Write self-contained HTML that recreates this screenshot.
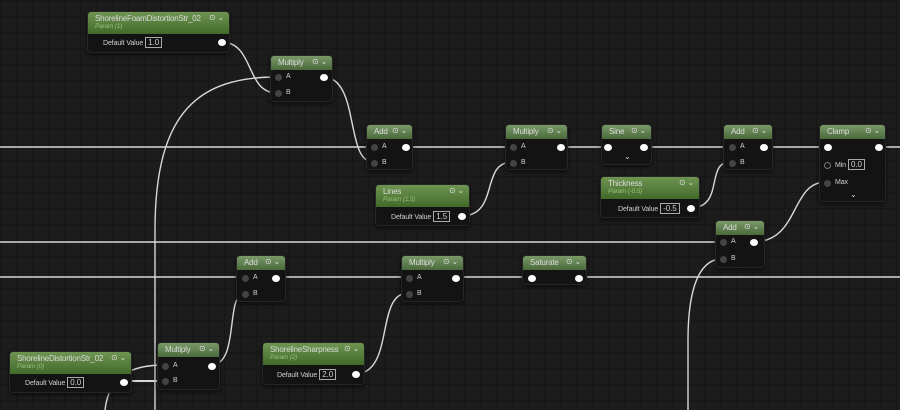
<!DOCTYPE html>
<html><head><meta charset="utf-8"><style>
*{margin:0;padding:0;box-sizing:border-box}
body{width:900px;height:410px;overflow:hidden;background:#1c1c1c;font-family:"Liberation Sans",sans-serif;position:relative;
background-image:linear-gradient(90deg,rgba(0,0,0,0.18) 1px,transparent 1px),linear-gradient(rgba(0,0,0,0.18) 1px,transparent 1px);
background-size:16px 16px;}
svg{position:absolute;left:0;top:0}
.n{position:absolute;background:#131313;border-radius:4px;box-shadow:0 2px 4px rgba(0,0,0,0.6);border:1px solid #262626}
.h{height:14px;background:linear-gradient(#7a9968,#4a6a3c);border-radius:3px 3px 0 0;color:#dcdcdc;font-size:8px;font-weight:normal;letter-spacing:-0.2px;padding:2px 0 0 7px;position:relative;white-space:nowrap}
.h2{height:22px;background:linear-gradient(#6f9552,#416a2a)}
.h .s{position:absolute;right:5px;top:1px;font-size:8px;color:#ddd}
.h .p{display:block;font-style:italic;font-size:6.5px;color:#98bf78;margin-top:0}
.t{position:absolute;color:#d0d0d0;font-size:7px;letter-spacing:-0.1px}
.box{border:1px solid #aaa;padding:0 2px;margin-left:2px;font-size:8px}
.pin{position:absolute;width:8px;height:7px;border-radius:50%;background:#fff}
.ip{position:absolute;width:7px;height:7px;border-radius:50%;background:#444}
.ch{position:absolute;color:#ddd;font-size:8px}
</style></head><body>
<svg width="900" height="410" fill="none" stroke="#d8d8d8" stroke-width="1.4">
<path d="M0 147H900"/><path d="M0 242H722"/><path d="M0 277H900"/>
<path d="M277 77C200 77 155 110 155 230V410"/>
<path d="M221 42C255 42 245 93 277 93"/>
<path d="M323 77C360 77 345 162 373 162"/>
<path d="M461 216C500 216 480 162 512 162"/>
<path d="M690 208C725 208 705 162 730 162"/>
<path d="M753 242C800 242 790 182 826 182"/>
<path d="M211 365C240 365 225 294 244 294"/>
<path d="M355 374C395 374 375 293 408 293"/>
<path d="M722 259C695 259 688 300 688 340V410"/>
<path d="M122 381H164" stroke-width="2"/>
<path d="M164 365C120 365 108 385 105 410"/>
</svg>

<div class="n" style="left:87px;top:11px;width:143px;height:42px"><div class="h h2">ShorelineFoamDistortionStr_02<span class="s">⊙ ⌄</span><span class="p">Param (1)</span></div>
<div class="t" style="left:15px;top:26px">Default Value<span class="box">1.0</span></div><div class="pin" style="left:130px;top:27px"></div></div>

<div class="n" style="left:270px;top:55px;width:63px;height:47px"><div class="h">Multiply<span class="s">⊙ ⌄</span></div>
<div class="ip" style="left:4px;top:18px"></div><div class="t" style="left:15px;top:17px">A</div>
<div class="ip" style="left:4px;top:34px"></div><div class="t" style="left:15px;top:33px">B</div><div class="pin" style="left:49px;top:18px"></div></div>

<div class="n" style="left:366px;top:124px;width:47px;height:46px"><div class="h">Add<span class="s">⊙ ⌄</span></div>
<div class="ip" style="left:4px;top:19px"></div><div class="t" style="left:15px;top:18px">A</div>
<div class="ip" style="left:4px;top:35px"></div><div class="t" style="left:15px;top:34px">B</div><div class="pin" style="left:35px;top:19px"></div></div>

<div class="n" style="left:505px;top:124px;width:63px;height:46px"><div class="h">Multiply<span class="s">⊙ ⌄</span></div>
<div class="ip" style="left:4px;top:19px"></div><div class="t" style="left:15px;top:18px">A</div>
<div class="ip" style="left:4px;top:35px"></div><div class="t" style="left:15px;top:34px">B</div><div class="pin" style="left:51px;top:19px"></div></div>

<div class="n" style="left:601px;top:124px;width:51px;height:41px"><div class="h">Sine<span class="s">⊙ ⌄</span></div>
<div class="pin" style="left:2px;top:19px"></div><div class="pin" style="left:38px;top:19px"></div><div class="ch" style="left:22px;top:27px">⌄</div></div>

<div class="n" style="left:723px;top:124px;width:50px;height:46px"><div class="h">Add<span class="s">⊙ ⌄</span></div>
<div class="ip" style="left:5px;top:19px"></div><div class="t" style="left:16px;top:18px">A</div>
<div class="ip" style="left:5px;top:35px"></div><div class="t" style="left:16px;top:34px">B</div><div class="pin" style="left:36px;top:19px"></div></div>

<div class="n" style="left:819px;top:124px;width:67px;height:78px"><div class="h">Clamp<span class="s">⊙ ⌄</span></div>
<div class="pin" style="left:4px;top:19px"></div><div class="pin" style="left:55px;top:19px"></div>
<div class="ip" style="left:4px;top:37px;background:none;border:1px solid #777"></div><div class="t" style="left:15px;top:35px">Min<span class="box">0.0</span></div>
<div class="ip" style="left:4px;top:55px"></div><div class="t" style="left:15px;top:54px">Max</div><div class="ch" style="left:30px;top:65px">⌄</div></div>

<div class="n" style="left:375px;top:184px;width:95px;height:42px"><div class="h h2">Lines<span class="s">⊙ ⌄</span><span class="p">Param (1.5)</span></div>
<div class="t" style="left:15px;top:27px">Default Value<span class="box">1.5</span></div><div class="pin" style="left:82px;top:28px"></div></div>

<div class="n" style="left:600px;top:176px;width:100px;height:42px"><div class="h h2">Thickness<span class="s">⊙ ⌄</span><span class="p">Param (-0.5)</span></div>
<div class="t" style="left:17px;top:27px">Default Value<span class="box">-0.5</span></div><div class="pin" style="left:86px;top:28px"></div></div>

<div class="n" style="left:715px;top:220px;width:50px;height:48px"><div class="h">Add<span class="s">⊙ ⌄</span></div>
<div class="ip" style="left:4px;top:18px"></div><div class="t" style="left:15px;top:17px">A</div>
<div class="ip" style="left:4px;top:35px"></div><div class="t" style="left:15px;top:34px">B</div><div class="pin" style="left:34px;top:18px"></div></div>

<div class="n" style="left:236px;top:255px;width:50px;height:47px"><div class="h">Add<span class="s">⊙ ⌄</span></div>
<div class="ip" style="left:5px;top:19px"></div><div class="t" style="left:16px;top:18px">A</div>
<div class="ip" style="left:5px;top:35px"></div><div class="t" style="left:16px;top:34px">B</div><div class="pin" style="left:35px;top:19px"></div></div>

<div class="n" style="left:401px;top:255px;width:63px;height:47px"><div class="h">Multiply<span class="s">⊙ ⌄</span></div>
<div class="ip" style="left:4px;top:19px"></div><div class="t" style="left:15px;top:18px">A</div>
<div class="ip" style="left:4px;top:35px"></div><div class="t" style="left:15px;top:34px">B</div><div class="pin" style="left:50px;top:19px"></div></div>

<div class="n" style="left:522px;top:255px;width:65px;height:30px"><div class="h">Saturate<span class="s">⊙ ⌄</span></div>
<div class="pin" style="left:5px;top:19px"></div><div class="pin" style="left:52px;top:19px"></div></div>

<div class="n" style="left:157px;top:342px;width:63px;height:48px"><div class="h">Multiply<span class="s">⊙ ⌄</span></div>
<div class="ip" style="left:4px;top:20px"></div><div class="t" style="left:15px;top:19px">A</div>
<div class="ip" style="left:4px;top:35px"></div><div class="t" style="left:15px;top:34px">B</div><div class="pin" style="left:50px;top:20px"></div></div>

<div class="n" style="left:262px;top:342px;width:103px;height:43px"><div class="h h2">ShorelineSharpness<span class="s">⊙ ⌄</span><span class="p">Param (2)</span></div>
<div class="t" style="left:14px;top:27px">Default Value<span class="box">2.0</span></div><div class="pin" style="left:89px;top:28px"></div></div>

<div class="n" style="left:9px;top:351px;width:123px;height:42px"><div class="h h2">ShorelineDistortionStr_02<span class="s">⊙ ⌄</span><span class="p">Param (0)</span></div>
<div class="t" style="left:15px;top:26px">Default Value<span class="box">0.0</span></div><div class="pin" style="left:110px;top:27px"></div></div>
</body></html>
